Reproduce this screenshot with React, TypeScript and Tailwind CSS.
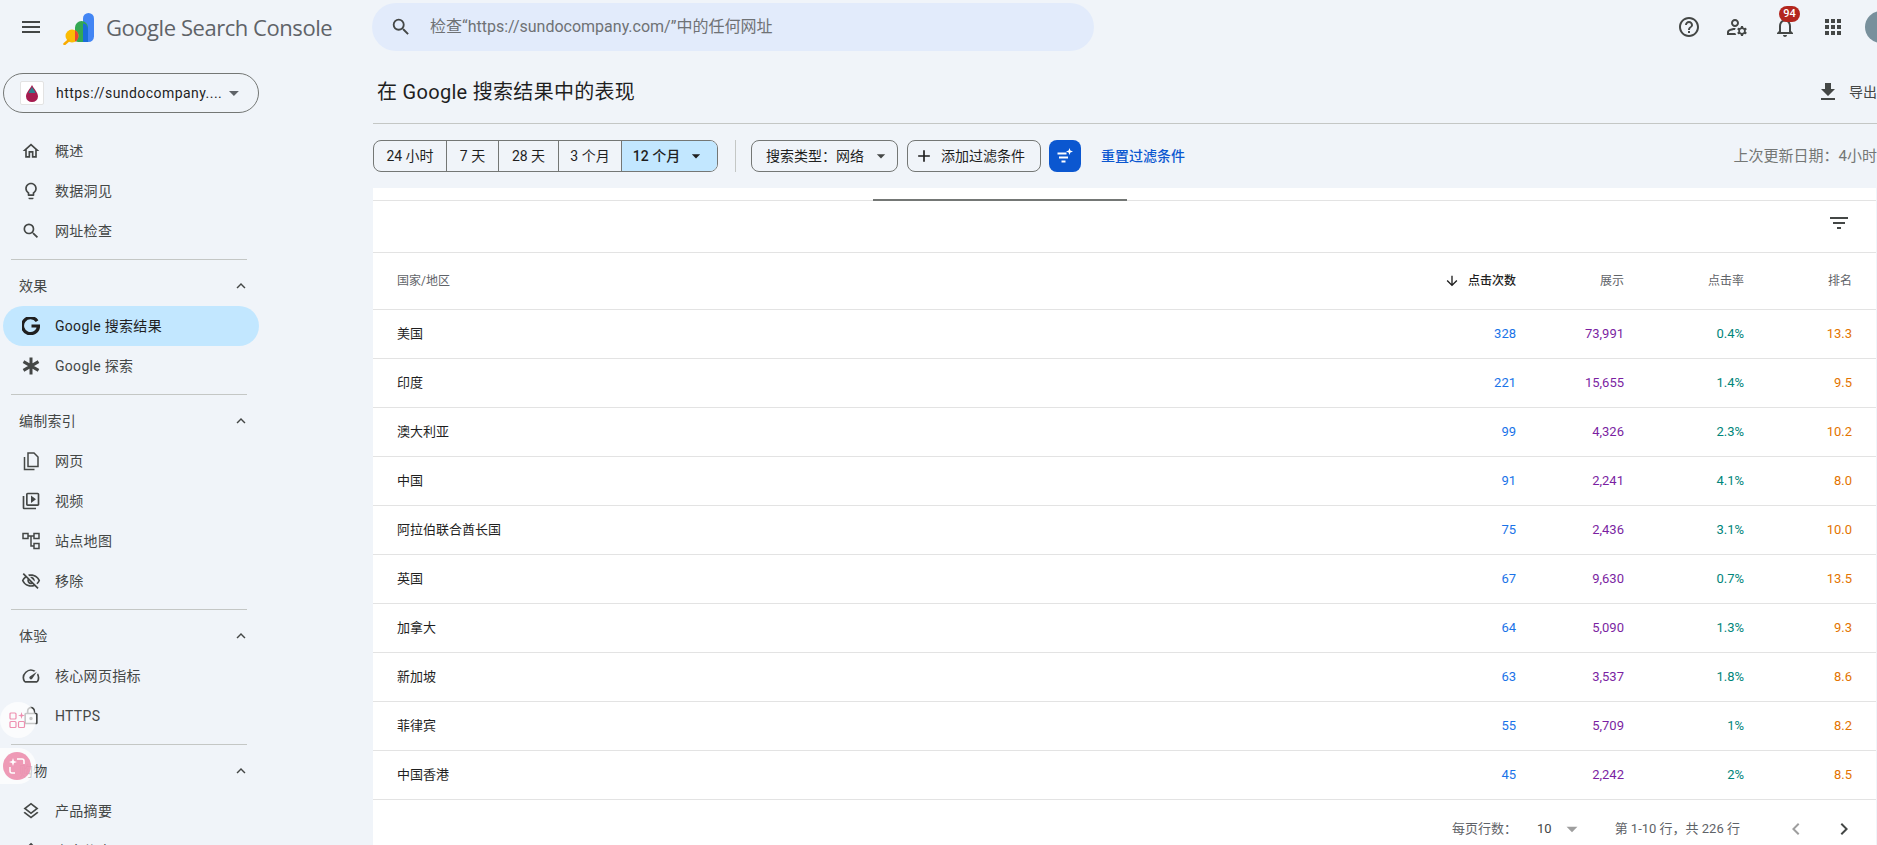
import React from "react";
import {
  MdMenu, MdSearch, MdOutlineHome, MdOutlineLightbulb, MdExpandLess,
  MdOutlineVideoLibrary, MdOutlineVisibilityOff, MdOutlineSpeed, MdOutlineLock, MdOutlineLayers,
  MdHelpOutline, MdOutlineManageAccounts, MdOutlineNotifications, MdApps, MdFileDownload,
  MdFilterList, MdArrowDownward, MdChevronLeft, MdChevronRight, MdArrowDropDown, MdAdd,
} from "react-icons/md";

const Logo = () => (
  <svg width="31" height="32" viewBox="0 0 31 32" className="shrink-0">
    <rect x="20" y="0" width="11" height="29" rx="5.500" fill="#4285f4" />
    <path d="M12 14.500a6.500 6.500 0 0 1 13 0V29h-9.500A3.500 3.500 0 0 1 12 25.500z" fill="#34a853" />
    <path d="M20 10.200a6.500 6.500 0 0 1 5 6.300V29h-5z" fill="#1a6dd8" />
    <circle cx="9" cy="23" r="6.500" fill="#fbbc04" />
    <path d="M12 17.300a6.500 6.500 0 0 1 0 11.400z" fill="#ea4335" />
    <path d="M1.500 31l4-3.500" stroke="#f9ab00" strokeWidth="2.500" strokeLinecap="round" />
  </svg>
);

const SitemapIcon = () => (
  <svg width="18" height="18" viewBox="0 0 18 18" fill="none" stroke="#444746" strokeWidth="1.500">
    <rect x="1" y="1.500" width="5" height="5" />
    <rect x="12" y="1.500" width="5" height="5" />
    <rect x="12" y="11.500" width="5" height="5" />
    <path d="M6 4h6M9 4v10h3" />
  </svg>
);

const PagesIcon = () => (
  <svg width="20" height="20" viewBox="0 0 20 20" fill="none" stroke="#444746" strokeWidth="1.500">
    <path d="M7 2h6l4 4v9.500H7z" />
    <path d="M3.500 6v12.500h10" />
  </svg>
);

const AsteriskIcon = () => (
  <svg width="20" height="20" viewBox="0 0 20 20" stroke="#444746" strokeWidth="3">
    <path d="M10 1.500v17M2.500 5.600l15 8.800M17.500 5.600l-15 8.800" />
  </svg>
);

const GIcon = () => (
  <svg width="18" height="18" viewBox="0 0 18 18" fill="none" className="shrink-0">
    <path d="M15.100 4.100A8 8 0 1 0 16.500 9H9.500" stroke="#1f1f1f" strokeWidth="3.200" />
  </svg>
);

const PeakIcon = () => (
  <svg width="20" height="20" viewBox="0 0 20 20" fill="none" stroke="#444746" strokeWidth="1.800">
    <path d="M10 3l3 3v10H7V6z" />
  </svg>
);

type NavRow = { label: string; icon: React.ReactNode };

const Item = ({ label, icon, active }: NavRow & { active?: boolean }) => (
  <div className={`ml-[3px] flex h-10 w-[256px] items-center rounded-full text-[14px] tracking-[0.3px] ${active ? "bg-[#c2e7ff] text-[#1f1f1f]" : "text-[#444746]"}`}>
    <span className="flex w-[52px] shrink-0 items-center justify-center pl-[4px]">{icon}</span>
    <span>{label}</span>
  </div>
);

const Heading = ({ label }: { label: string }) => (
  <div className="flex h-[46px] w-[256px] items-center justify-between pl-[19px] pr-[6px] pt-[6px] text-[14px] tracking-[0.25px] text-[#444746]">
    <span>{label}</span>
    <MdExpandLess size={18} color="#444746" />
  </div>
);

const Rule = () => <div className="ml-[11px] mt-[8px] h-px w-[236px] bg-[#c4c7c5]" />;

const ic = "#444746";
const rows: [string, string, string, string, string][] = [
  ["美国", "328", "73,991", "0.4%", "13.3"],
  ["印度", "221", "15,655", "1.4%", "9.5"],
  ["澳大利亚", "99", "4,326", "2.3%", "10.2"],
  ["中国", "91", "2,241", "4.1%", "8.0"],
  ["阿拉伯联合酋长国", "75", "2,436", "3.1%", "10.0"],
  ["英国", "67", "9,630", "0.7%", "13.5"],
  ["加拿大", "64", "5,090", "1.3%", "9.3"],
  ["新加坡", "63", "3,537", "1.8%", "8.6"],
  ["菲律宾", "55", "5,709", "1%", "8.2"],
  ["中国香港", "45", "2,242", "2%", "8.5"],
];

const Sidebar = () => (
  <aside className="h-[791px] w-[373px] shrink-0 overflow-hidden">
    <div className="ml-[3px] mt-[19px] flex h-10 w-[256px] items-center rounded-full border border-[#747775] pl-[16px] pr-[14px]">
      <span className="flex h-6 w-6 shrink-0 items-center justify-center rounded-[2px] border border-[#e3e3e3] bg-white">
        <svg width="12" height="17" viewBox="0 0 12 17">
          <path d="M6 0C8 4 12 7.500 12 11.500A6 5.500 0 0 1 0 11.500C0 7.500 4 4 6 0z" fill="#a61b4f" />
          <path d="M6 2C7.500 4.500 9 6 9.500 8H2.500C3 6 4.500 4.500 6 2z" fill="#2f7f8c" />
        </svg>
      </span>
      <span className="ml-[12px] flex-1 whitespace-nowrap text-[14px] tracking-[0.45px] text-[#1f1f1f]">https://sundocompany....</span>
      <MdArrowDropDown size={24} color="#5f6368" className="-mr-[2px]" />
    </div>
    <div className="mt-[18px]">
      <Item label="概述" icon={<MdOutlineHome size={20} color={ic} />} />
      <Item label="数据洞见" icon={<MdOutlineLightbulb size={20} color={ic} />} />
      <Item label="网址检查" icon={<MdSearch size={20} color={ic} />} />
      <Rule />
      <Heading label="效果" />
      <Item active label="Google 搜索结果" icon={<GIcon />} />
      <Item label="Google 探索" icon={<AsteriskIcon />} />
      <Rule />
      <Heading label="编制索引" />
      <Item label="网页" icon={<PagesIcon />} />
      <Item label="视频" icon={<MdOutlineVideoLibrary size={20} color={ic} />} />
      <Item label="站点地图" icon={<SitemapIcon />} />
      <Item label="移除" icon={<MdOutlineVisibilityOff size={20} color={ic} />} />
      <Rule />
      <Heading label="体验" />
      <Item label="核心网页指标" icon={<MdOutlineSpeed size={20} color={ic} />} />
      <Item label="HTTPS" icon={<MdOutlineLock size={20} color={ic} />} />
      <Rule />
      <Heading label="购物" />
      <Item label="产品摘要" icon={<MdOutlineLayers size={20} color={ic} />} />
      <Item label="商家信息" icon={<PeakIcon />} />
    </div>
  </aside>
);

const Seg = ({ w, children, last }: { w: string; children: React.ReactNode; last?: boolean }) => (
  <div className={`flex h-full items-center justify-center ${w} ${last ? "bg-[#c2e7ff] text-[#1f1f1f]" : "border-r border-[#747775] text-[#1f1f1f]"}`}>{children}</div>
);

const Main = () => (
  <main className="min-w-0 flex-1 overflow-hidden">
    <div className="flex h-[70px] items-center justify-between border-b border-[#c4c7c5] pl-[4px] pt-[7px]">
      <h1 className="text-[20px] font-normal tracking-[0.3px] text-[#1f1f1f]">在 Google 搜索结果中的表现</h1>
      <div className="flex items-center text-[14px] text-[#444746]">
        <MdFileDownload size={24} color="#444746" />
        <span className="ml-[9px] w-[28px] whitespace-nowrap">导出</span>
      </div>
    </div>
    <div className="flex h-[64px] items-start pt-[16px]">
      <div className="flex h-8 w-[345px] items-stretch overflow-hidden rounded-lg border border-[#747775] text-[14px]">
        <Seg w="w-[73px]">24 小时</Seg>
        <Seg w="w-[52px]">7 天</Seg>
        <Seg w="w-[60px]">28 天</Seg>
        <Seg w="w-[63px]">3 个月</Seg>
        <Seg w="flex-1" last>
          <span className="font-medium">12 个月</span>
          <MdArrowDropDown size={20} color="#1f1f1f" className="ml-[6px]" />
        </Seg>
      </div>
      <div className="ml-[17px] h-8 w-px bg-[#c4c7c5]" />
      <div className="ml-[15px] flex h-8 w-[147px] items-center rounded-lg border border-[#747775] pl-[14px] text-[14px] text-[#1f1f1f]">
        <span className="whitespace-nowrap">搜索类型：网络</span>
        <MdArrowDropDown size={20} color="#444746" className="ml-[7px]" />
      </div>
      <div className="ml-[9px] flex h-8 w-[134px] items-center rounded-lg border border-[#747775] pl-[6px] text-[14px] text-[#1f1f1f]">
        <MdAdd size={20} color="#1f1f1f" />
        <span className="ml-[7px] whitespace-nowrap">添加过滤条件</span>
      </div>
      <div className="ml-[8px] flex h-8 w-[32px] items-center justify-center rounded-lg bg-[#0b57d0]">
        <svg width="18" height="18" viewBox="0 0 18 18" fill="none" stroke="#fff" strokeWidth="1.800">
          <path d="M1.500 6.500h9M3 10.500h9M5.500 14.500h4" />
          <path d="M13.500 1l.9 2.600 2.600.9-2.600.9-.9 2.600-.9-2.600-2.600-.9 2.600-.9z" fill="#fff" stroke="none" />
        </svg>
      </div>
      <span className="ml-[20px] whitespace-nowrap text-[14px] font-medium leading-8 text-[#0b57d0]">重置过滤条件</span>
      <span className="ml-auto whitespace-nowrap text-[15px] leading-8 text-[#747775]">上次更新日期：4小时</span>
    </div>
    <div className="mr-px bg-white">
      <div className="relative h-[13px] border-b border-[#e3e3e3]">
        <div className="absolute bottom-[-1px] left-[500px] h-[2px] w-[254px] bg-[#747775]" />
      </div>
      <div className="flex h-[52px] items-center justify-end border-b border-[#e3e3e3] pb-[8px] pr-[25px]">
        <MdFilterList size={24} color="#444746" />
      </div>
      <div className="flex h-[57px] items-center border-b border-[#e3e3e3] pl-[24px] pr-[24px] text-[12px] text-[#5f6368]">
        <span className="flex-1">国家/地区</span>
        <span className="flex w-[100px] items-center justify-end font-medium text-[#1f1f1f]">
          <MdArrowDownward size={16} color="#1f1f1f" className="mr-[8px]" />点击次数
        </span>
        <span className="w-[108px] text-right">展示</span>
        <span className="w-[120px] text-right">点击率</span>
        <span className="w-[108px] text-right">排名</span>
      </div>
      {rows.map((r) => (
        <div key={r[0]} className="flex h-[49px] items-center border-b border-[#e3e3e3] pl-[24px] pr-[24px] text-[13px]">
          <span className="flex-1 text-[#1f1f1f]">{r[0]}</span>
          <span className="w-[100px] text-right text-[#1a73e8]">{r[1]}</span>
          <span className="w-[108px] text-right text-[#7b1fa2]">{r[2]}</span>
          <span className="w-[120px] text-right text-[#00857a]">{r[3]}</span>
          <span className="w-[108px] text-right text-[#e37400]">{r[4]}</span>
        </div>
      ))}
      <div className="flex h-[45px] items-center pt-[12px] text-[13px] text-[#5f6368]">
        <span className="ml-[1079px] w-[85px]">每页行数：</span>
        <span className="text-[#444746]">10</span>
        <MdArrowDropDown size={26} color="#9e9e9e" className="ml-[7px]" />
        <span className="ml-[30px] w-[169px]">第 1-10 行，共 226 行</span>
        <MdChevronLeft size={24} color="#9e9e9e" />
        <MdChevronRight size={24} color="#444746" className="ml-[24px]" />
      </div>
    </div>
  </main>
);

export default function App() {
  return (
    <div className="relative h-[845px] w-[1877px] overflow-hidden bg-[#f0f4f9] font-['Roboto','Noto_Sans_CJK_SC',sans-serif]">
      <header className="flex h-[54px] items-center">
        <div className="flex w-[372px] shrink-0 items-center">
          <MdMenu size={24} color="#444746" className="ml-[19px]" />
          <div className="ml-[20px] mt-[3px]"><Logo /></div>
          <span className="ml-[12px] whitespace-nowrap font-['Open_Sans',sans-serif] text-[22px] tracking-[-0.45px] text-[#5f6368]">Google Search Console</span>
        </div>
        <div className="flex h-12 w-[722px] items-center rounded-full bg-[#e2ebfb] pl-[18px]">
          <MdSearch size={22} color="#444746" />
          <span className="ml-[18px] text-[16px] text-[#6f7275]">检查“https://sundocompany.com/”中的任何网址</span>
        </div>
        <div className="relative ml-auto flex items-center">
          <MdHelpOutline size={24} color="#444746" />
          <MdOutlineManageAccounts size={24} color="#444746" className="ml-[24px]" />
          <MdOutlineNotifications size={24} color="#444746" className="ml-[24px]" />
          <span className="absolute left-[102px] top-[-5px] flex h-4 w-[21px] items-center justify-center rounded-full bg-[#b3261e] text-[11px] font-medium text-white">94</span>
          <MdApps size={24} color="#444746" className="ml-[24px]" />
          <span className="-mr-[20px] ml-[20px] block h-8 w-8 rounded-full bg-[#78909c]" />
        </div>
      </header>
      <div className="flex">
        <Sidebar />
        <Main />
      </div>
      <div className="absolute left-0 top-[702px] flex h-9 w-9 items-center justify-center rounded-full bg-white/70">
        <svg width="18" height="18" viewBox="0 0 18 18" fill="none" stroke="#ee8fb0" strokeWidth="1.200">
          <rect x="1" y="2" width="6" height="6" rx="1" />
          <rect x="1" y="10.500" width="6" height="6" rx="1" />
          <rect x="9.500" y="10.500" width="6" height="6" rx="1" />
          <path d="M12.500 1l.8 2.700 2.700.8-2.700.8-.8 2.700-.8-2.700-2.700-.8 2.700-.8z" fill="#ee8fb0" stroke="none" />
        </svg>
      </div>
      <div className="absolute left-0 top-[748px] flex h-9 w-9 items-center rounded-r-full bg-white/70">
        <span className="ml-[3px] flex h-7 w-7 items-center justify-center rounded-full bg-[#ec8fae]/90">
          <svg width="20" height="20" viewBox="0 0 20 20" fill="none" stroke="#fff" strokeWidth="1.500">
            <path d="M10 3h5a2 2 0 0 1 2 2v3" />
            <path d="M8 17H5a2 2 0 0 1-2-2v-4" />
            <path d="M6 2l1 3 3 1-3 1-1 3-1-3-3-1 3-1z" fill="#fff" stroke="none" />
          </svg>
        </span>
      </div>
    </div>
  );
}
